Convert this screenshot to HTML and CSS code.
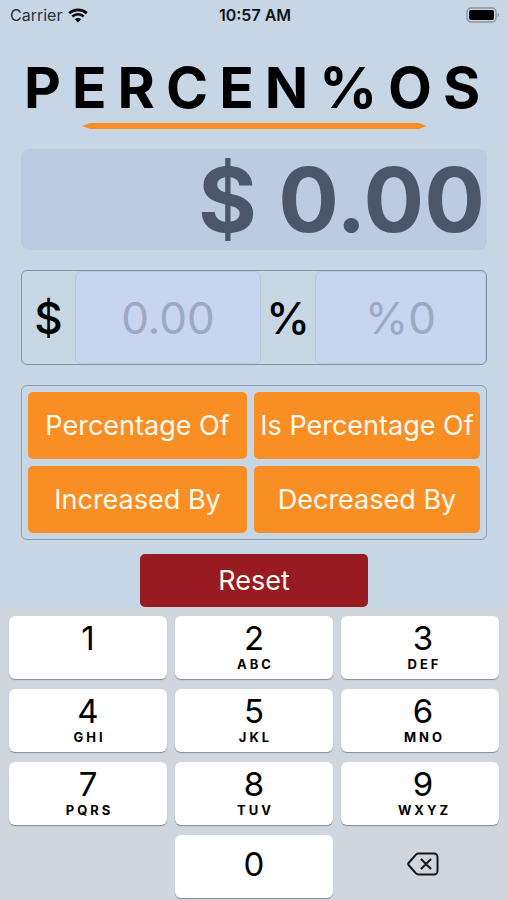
FILE: index.html
```html
<!DOCTYPE html>
<html lang="en">
<head>
<meta charset="utf-8">
<meta name="viewport" content="width=device-width, initial-scale=1">
<title>Percen%os</title>
<link rel="stylesheet" href="styles.css">
</head>
<body>
<header class="status">
  <div class="carrier">
    <span>Carrier</span>
    <svg class="wifi" viewBox="0 0 20 15" aria-hidden="true">
      <path d="M1.200 5.200C6 .8 14 .8 18.800 5.200M4.300 8.500c3.200-3 8.200-3 11.400 0" fill="none" stroke="#05090d" stroke-width="2.600"/>
      <path d="M10 14.500 6.800 11.300c1.800-1.700 4.600-1.700 6.400 0z" fill="#05090d"/>
    </svg>
  </div>
  <time class="clock">10:57 AM</time>
  <svg class="battery" viewBox="0 0 34 16" aria-hidden="true">
    <rect x="1" y="1" width="29" height="14" rx="4" fill="none" stroke="#8b949d" stroke-width="1.300"/>
    <rect x="3" y="3" width="25" height="10" rx="2" fill="#000"/>
    <path d="M31.500 6c2 .6 2 3.400 0 4z" fill="#8b949d"/>
  </svg>
</header>
<main class="app">
  <h1 class="title">PERCEN%OS</h1>
  <svg class="rule" viewBox="0 0 345 6" preserveAspectRatio="none" aria-hidden="true">
    <path d="M0 3 8 0H337L345 3 337 6H8z" fill="#f98e24"/>
  </svg>
  <output class="result">$ 0.00</output>
  <form class="fields">
    <label for="amount">$</label>
    <input id="amount" type="text" inputmode="decimal" placeholder="0.00">
    <label for="percent">%</label>
    <input id="percent" type="text" inputmode="decimal" placeholder="%0">
  </form>
  <section class="actions">
    <button type="button">Percentage Of</button>
    <button type="button">Is Percentage Of</button>
    <button type="button">Increased By</button>
    <button type="button">Decreased By</button>
  </section>
  <button class="reset" type="button">Reset</button>
</main>
<section class="keypad">
  <button type="button" class="key">1</button>
  <button type="button" class="key">2<small>ABC</small></button>
  <button type="button" class="key">3<small>DEF</small></button>
  <button type="button" class="key">4<small>GHI</small></button>
  <button type="button" class="key">5<small>JKL</small></button>
  <button type="button" class="key">6<small>MNO</small></button>
  <button type="button" class="key">7<small>PQRS</small></button>
  <button type="button" class="key">8<small>TUV</small></button>
  <button type="button" class="key">9<small>WXYZ</small></button>
  <button type="button" class="key zero">0</button>
  <button type="button" class="delete" aria-label="Delete">
    <svg viewBox="0 0 32 24" aria-hidden="true">
      <path d="M11.500 1.500H27a3.500 3.500 0 0 1 3.500 3.500v14a3.500 3.500 0 0 1-3.500 3.500H11.500c-1 0-1.800-.4-2.500-1.100L2 13.500c-1-1-1-2 0-3L9 2.600c.7-.7 1.500-1.100 2.500-1.100zM14.500 7.500l9 9M23.500 7.500l-9 9" fill="none" stroke="#12161c" stroke-width="2" stroke-linecap="round" stroke-linejoin="round"/>
    </svg>
  </button>
</section>
</body>
</html>
```

FILE: styles.css
```css
* {
  box-sizing: border-box;
}

body {
  margin: 0;
  min-height: 100vh;
  display: flex;
  flex-direction: column;
  background: #c7d6e5;
  color: #000;
  font-family: Inter, "Liberation Sans", sans-serif;
}

button,
input {
  font: inherit;
  margin: 0;
  padding: 0;
  border: 0;
}

.status {
  display: grid;
  grid-template-columns: 1fr auto 1fr;
  align-items: center;
  height: 30px;
  padding: 0 7px 0 10px;
  font-size: 16px;
  color: #27313c;
}

.carrier {
  display: flex;
  align-items: center;
  gap: 6px;
}

.wifi {
  width: 20px;
  height: 15px;
}

.clock {
  color: #0b1117;
  font-weight: 600;
}

.battery {
  width: 34px;
  height: 16px;
  justify-self: end;
}

.app {
  display: flex;
  flex-direction: column;
  padding: 28px 20px 0 21px;
}

.title {
  margin: 0;
  padding-left: 3px;
  font-size: 57px;
  line-height: 60px;
  font-weight: 700;
  letter-spacing: 11px;
  text-align: center;
  white-space: nowrap;
}

.rule {
  width: 74%;
  height: 6px;
  margin: 5px auto 20px;
}

.result {
  display: block;
  height: 101px;
  padding: 0 2px;
  border-radius: 8px;
  background: #bbcce2;
  color: #4b566b;
  font-size: 90px;
  line-height: 101px;
  font-weight: 700;
  text-align: right;
  white-space: nowrap;
}

.fields {
  display: grid;
  grid-template-columns: 53px 186fr 54px 171fr;
  height: 95px;
  margin-top: 20px;
  border: 1px solid #8291a7;
  border-radius: 6px;
  background: #c7d8e4;
  font-size: 44px;
}

.fields label {
  display: grid;
  place-items: center;
  font-weight: 500;
}

.fields input {
  min-width: 0;
  border: 1px solid #b9c7dd;
  border-radius: 6px;
  background: #c7d5f0;
  text-align: center;
}

.fields input::placeholder {
  color: #9ca9c2;
  opacity: 1;
}

.actions {
  display: grid;
  grid-template-columns: 219fr 226fr;
  grid-auto-rows: 67px;
  gap: 7px;
  margin-top: 20px;
  padding: 6px;
  border: 1px solid #8b9db3;
  border-radius: 6px;
}

.actions button,
.reset {
  border-radius: 5px;
  background: #f98e24;
  color: #fffaf0;
  font-size: 27px;
  white-space: nowrap;
}

.reset {
  align-self: center;
  width: 49%;
  height: 53px;
  margin: 14px 0 1px;
  background: #971b20;
}

.keypad {
  flex: 1;
  display: grid;
  grid-template-columns: repeat(3, 1fr);
  grid-auto-rows: 63px;
  gap: 10px 8px;
  padding: 8px 8px 2px 9px;
  background: #d0d6de;
}

.key {
  display: flex;
  flex-direction: column;
  align-items: center;
  padding-top: 4px;
  border-radius: 6px;
  background: #fff;
  box-shadow: 0 1px 1px #858a91;
  color: #000;
  font-size: 33px;
  line-height: 36px;
}

.key small {
  padding-left: 3px;
  font-size: 13px;
  line-height: 16px;
  font-weight: 700;
  letter-spacing: 3px;
}

.key:nth-child(3n),
.delete {
  padding-left: 6px;
}

.zero {
  grid-column: 2;
  justify-content: center;
  padding-top: 0;
  padding-bottom: 5px;
}

.delete {
  display: grid;
  place-items: center;
  padding-bottom: 5px;
  background: none;
}

.delete svg {
  width: 32px;
  height: 24px;
}
```
